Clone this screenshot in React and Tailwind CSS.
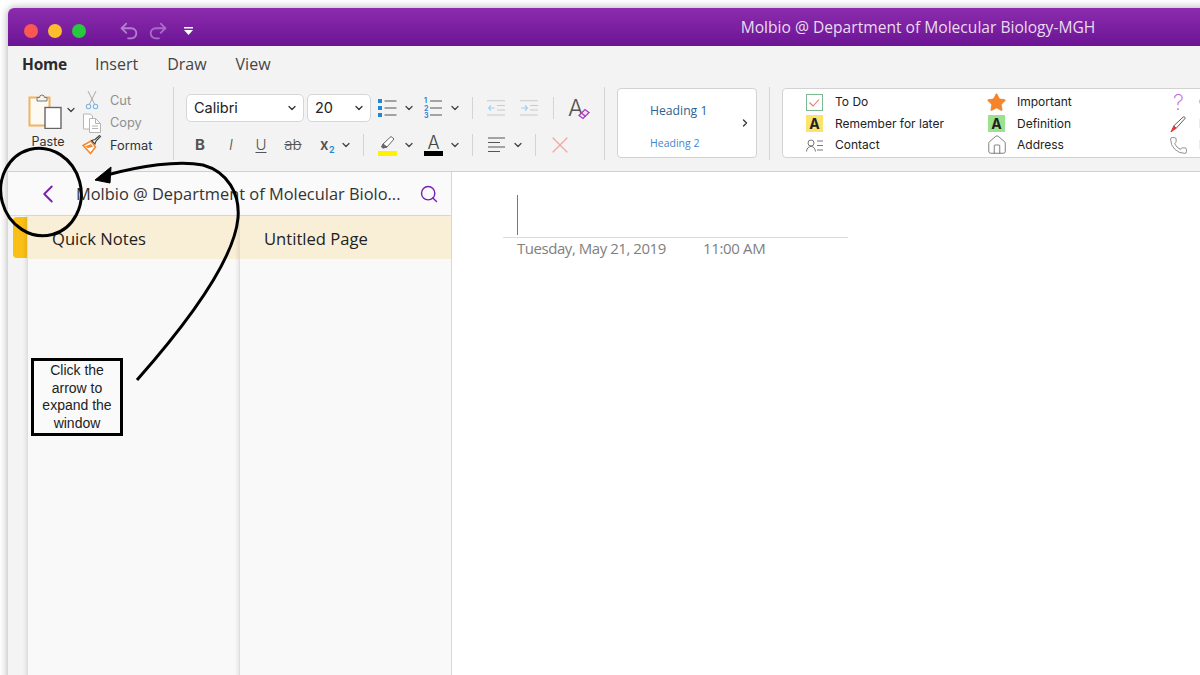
import { ChevronDown, ChevronLeft, ChevronRight, House, Phone, Redo2, Search, Star, Undo2, X } from 'lucide-react';

const ui = 'font-["Inter",sans-serif]';
const note = 'font-["Open_Sans",sans-serif]';

function Drop({ className = '' }) {
  return <ChevronDown size={12} strokeWidth={2.6} className={`shrink-0 text-[#444] ${className}`} />;
}

function Sep({ className = '' }) {
  return <div className={`w-px h-[22px] shrink-0 bg-[#d4d4d4] ${className}`} />;
}

function Select({ label, className = '' }) {
  return (
    <div className={`h-[28px] flex items-center justify-between pl-[7px] pr-[5px] bg-white border border-[#d6d6d6] rounded-[5px] text-[14.5px] text-[#222] ${ui} ${className}`}>
      {label}
      <ChevronDown size={12} strokeWidth={2.6} className="text-[#333]" />
    </div>
  );
}

function ClipboardIcon() {
  return (
    <svg width="34" height="36" viewBox="0 0 34 36" fill="none">
      <rect x="1.5" y="4.5" width="20" height="28" fill="#fdfaf4" stroke="#f2b261" strokeWidth="2" />
      <path d="M9 8V4.5h2.5a2.5 2.500 0 0 1 5 0H19V8Z" fill="#f3f3f3" stroke="#777" strokeWidth="1" />
      <rect x="17" y="14.5" width="16" height="21" fill="#fff" stroke="#666" strokeWidth="1.4" />
    </svg>
  );
}

function CutIcon() {
  return (
    <svg width="14" height="20" viewBox="0 0 14 20" fill="none">
      <path d="M3 1 9.500 14M11 1 4.500 14" stroke="#a9a9a9" strokeWidth="1" />
      <circle cx="3.500" cy="16.500" r="2.200" stroke="#7fb6e0" strokeWidth="1.100" />
      <circle cx="10.500" cy="16.500" r="2.200" stroke="#7fb6e0" strokeWidth="1.100" />
    </svg>
  );
}

function CopyIcon() {
  return (
    <svg width="20" height="20" viewBox="0 0 20 20" fill="none" stroke="#b5b5b5" strokeWidth="1">
      <path d="M1.500 1h7l2 2v13h-9Z" fill="#fff" />
      <path d="M7.500 5.500h6l5 5v9h-11Z" fill="#fff" />
      <path d="M13.500 5.500v5h5M10 13h6M10 15.500h6" />
    </svg>
  );
}

function FormatIcon() {
  return (
    <svg width="20" height="20" viewBox="0 0 20 20" fill="none">
      <path d="M1 10.500 9 6l4.500 6-5 6.500Z" fill="#fff" stroke="#f28a30" strokeWidth="1.600" />
      <path d="M3 11.500 9 9l2 3-5 1Z" fill="#f28a30" />
      <path d="M9.500 5.500 13 9l1-3 4.500-4.500-1-1L13 4.500Z" fill="#fff" stroke="#444" strokeWidth="1.100" />
    </svg>
  );
}

function BulletsIcon() {
  return (
    <svg width="19" height="20" viewBox="0 0 19 20">
      <rect x="0" y="1" width="4" height="4" fill="#1f86d8" />
      <rect x="0" y="8" width="4" height="4" fill="#1f86d8" />
      <rect x="0" y="15" width="4" height="4" fill="#1f86d8" />
      <path d="M6.500 3h12M6.500 10h12M6.500 17h12" stroke="#555" strokeWidth="1.100" />
    </svg>
  );
}

function NumbersIcon() {
  return (
    <svg width="18" height="22" viewBox="0 0 18 22">
      <g fill="#1f86d8" fontSize="7" fontWeight="700" fontFamily="Inter, sans-serif">
        <text x="0" y="6">1</text>
        <text x="0" y="13.500">2</text>
        <text x="0" y="21">3</text>
      </g>
      <path d="M6 4h12M6 11h12M6 18h12" stroke="#555" strokeWidth="1.100" />
    </svg>
  );
}

function IndentIcon({ flip }) {
  return (
    <svg width="18" height="16" viewBox="0 0 18 16" fill="none">
      <path d="M0 .8h18M10 5.500h8M10 10h8M0 15h18" stroke="#c9c9c9" strokeWidth="1.100" />
      {flip ? (
        <path d="M1 8h6M5 5.500 7.500 8 5 10.500" stroke="#9fd0f2" strokeWidth="1.100" />
      ) : (
        <path d="M7.500 8h-6M4 5.500 1.500 8 4 10.500" stroke="#9fd0f2" strokeWidth="1.100" />
      )}
    </svg>
  );
}

function ClearFormat() {
  return (
    <div className={`relative w-[20px] h-[24px] ${ui}`}>
      <span className="text-[23px] leading-[24px] font-light text-[#555]">A</span>
      <svg width="12" height="12" viewBox="0 0 12 12" className="absolute right-[-2px] bottom-[0px]" fill="#f4e6f7" stroke="#a63db8" strokeWidth="1.300">
        <path d="M1 7.500 7 1.500l4 3-6 6Z" />
        <path d="M3.500 5 7.500 8.500" />
      </svg>
    </div>
  );
}

function HighlightIcon() {
  return (
    <div className="w-[19px] flex flex-col items-center">
      <svg width="19" height="16" viewBox="0 0 19 16" fill="none" stroke="#666" strokeWidth="1">
        <path d="M5 9 13 1.500l3 2.500L9 12l-4 1Z" fill="#fff" />
        <path d="M5 9l4 3-4 1-1.500-1Z" fill="#666" />
      </svg>
      <div className="w-[19px] h-[5px] bg-[#fff200]" />
    </div>
  );
}

function FontColorIcon() {
  return (
    <div className={`w-[19px] flex flex-col items-center ${ui}`}>
      <span className="h-[16px] text-[18px] leading-[16px] font-light text-[#444]">A</span>
      <div className="w-[19px] h-[5px] bg-black" />
    </div>
  );
}

function AlignIcon() {
  return (
    <svg width="17" height="16" viewBox="0 0 17 16" stroke="#555" strokeWidth="1.100">
      <path d="M0 1h17M0 5.500h12M0 10h17M0 14.500h12" />
    </svg>
  );
}

function TodoIcon() {
  return (
    <svg width="17" height="17" viewBox="0 0 17 17" fill="none">
      <rect x=".5" y=".5" width="16" height="16" stroke="#7cb98f" />
      <path d="M3.500 8.500 7 12l6-6.500" stroke="#e8776b" strokeWidth="1.100" />
    </svg>
  );
}

function LetterTag({ bg }) {
  return (
    <div className={`w-[17px] h-[17px] flex items-center justify-center text-[14px] font-bold text-[#222] ${bg} ${ui}`}>A</div>
  );
}

function ContactIcon() {
  return (
    <svg width="17" height="13" viewBox="0 0 17 13" fill="none" stroke="#777" strokeWidth="1">
      <circle cx="5" cy="4" r="3" />
      <path d="M.5 12.500c.5-3.500 2-5 4.500-5s4 1.500 4.500 5M11 2h6M11 6.500h6M11 11h6" />
    </svg>
  );
}

function MarkerIcon() {
  return (
    <svg width="18" height="18" viewBox="0 0 18 18" fill="none" stroke="#555" strokeWidth="1">
      <path d="M4 11 14 1.500c1-.8 2.500.7 1.800 1.800L6.500 13.500Z" fill="#fff" />
      <path d="M4 11l2.500 2.500L1 17.500Z" fill="#e5343c" stroke="#e5343c" />
    </svg>
  );
}

function Tag({ icon, label }) {
  return (
    <div className={`h-[21.500px] flex items-center text-[12px] text-[#222] whitespace-nowrap ${ui}`}>
      <div className="w-[17px] flex justify-center shrink-0">{icon}</div>
      <span className="ml-[12px]">{label}</span>
    </div>
  );
}

function SmallAction({ icon, label, muted }) {
  return (
    <div className={`h-[22.500px] flex items-center ${ui}`}>
      <div className="w-[20px] flex justify-center">{icon}</div>
      <span className={`ml-[8px] text-[12.800px] ${muted ? 'text-[#8f8f8f]' : 'text-[#333]'}`}>{label}</span>
    </div>
  );
}

function Ribbon() {
  return (
    <div className="h-[126px] bg-[#f3f3f3] border-b border-[#d0d0d0]">
      <div className={`h-[40px] flex items-start pl-[14px] pt-[7px] text-[16px] text-[#444] font-medium ${note}`}>
        <div className="w-[45px] h-[24px] flex flex-col">
          <span className="leading-[22px] text-[15.500px] font-bold text-[#2b2b2b] tracking-[-0.2px]">Home</span>
          <div className="mt-[2px] h-[2.500px] rounded-full bg-[#7719aa]" />
        </div>
        <span className="ml-[28px] leading-[22px]">Insert</span>
        <span className="ml-[29px] leading-[22px]">Draw</span>
        <span className="ml-[29px] leading-[22px]">View</span>
      </div>

      <div className="flex items-start h-[85px]">
        <div className="w-[165px] flex shrink-0 pl-[20px]">
          <div className="w-[34px] pt-[7px] flex flex-col items-center">
            <ClipboardIcon />
            <span className={`mt-[5px] ml-[6px] text-[12.500px] leading-[16px] text-[#333] ${ui}`}>Paste</span>
          </div>
          <Drop className="ml-[3px] mt-[18px]" />
          <div className="ml-[5px] pt-[3px]">
            <SmallAction muted label="Cut" icon={<CutIcon />} />
            <SmallAction muted label="Copy" icon={<CopyIcon />} />
            <SmallAction label="Format" icon={<FormatIcon />} />
          </div>
        </div>
        <div className="w-px h-[73px] mt-[1px] bg-[#d4d4d4] shrink-0" />

        <div className="w-[430px] shrink-0 pl-[12px] pt-[8px]">
          <div className="h-[28px] flex items-center">
            <Select label="Calibri" className="w-[118px]" />
            <Select label="20" className="w-[64px] ml-[3px]" />
            <div className="ml-[7px]"><BulletsIcon /></div>
            <Drop className="ml-[6px]" />
            <div className="ml-[9px]"><NumbersIcon /></div>
            <Drop className="ml-[7px]" />
            <Sep className="ml-[11px]" />
            <div className="ml-[14px]"><IndentIcon /></div>
            <div className="ml-[15px]"><IndentIcon flip /></div>
            <Sep className="ml-[15px]" />
            <div className="ml-[14px]"><ClearFormat /></div>
          </div>
          <div className={`h-[24px] mt-[11px] flex items-center text-[#555] ${ui}`}>
            <span className="w-[28px] text-center text-[15px] font-bold">B</span>
            <span className="w-[28px] ml-[3px] text-center text-[15px] italic font-light">I</span>
            <span className="w-[28px] ml-[2px] text-center text-[15px] underline underline-offset-2 font-light">U</span>
            <span className="w-[28px] ml-[4px] text-center text-[15px] line-through font-light">ab</span>
            <span className="w-[15px] ml-[13px] text-[15px] font-semibold relative">
              x
              <span className="absolute left-[9px] top-[9px] text-[9px] text-[#1f86d8]">2</span>
            </span>
            <Drop className="ml-[5px]" />
            <Sep className="ml-[11px]" />
            <div className="ml-[14px]"><HighlightIcon /></div>
            <Drop className="ml-[6px]" />
            <div className="ml-[9px]"><FontColorIcon /></div>
            <Drop className="ml-[6px]" />
            <Sep className="ml-[11px]" />
            <div className="ml-[15px]"><AlignIcon /></div>
            <Drop className="ml-[7px]" />
            <Sep className="ml-[11px]" />
            <X size={28} strokeWidth={1.100} className="ml-[10px] shrink-0 text-[#f3a5a5]" />
          </div>
        </div>
        <div className="w-px h-[73px] mt-[1px] bg-[#d4d4d4] shrink-0" />

        <div className={`w-[140px] h-[70px] ml-[12px] mt-[2px] shrink-0 flex bg-white border border-[#d2d2d2] rounded-[4px] pl-[32px] pr-[5px] ${note}`}>
          <div className="flex-1 pt-[13px]">
            <div className="text-[12.200px] leading-[18px] text-[#2e5f94]">Heading 1</div>
            <div className="mt-[15px] text-[10.500px] leading-[16px] text-[#3f86cc]">Heading 2</div>
          </div>
          <ChevronRight size={12} strokeWidth={2.600} className="self-center text-[#333]" />
        </div>
        <div className="w-px h-[73px] ml-[12px] mt-[1px] bg-[#d4d4d4] shrink-0" />

        <div className="w-[700px] h-[70px] ml-[12px] mt-[2px] shrink-0 flex bg-white border border-[#d2d2d2] rounded-[4px] pl-[23px] pt-[2.500px]">
          <div className="w-[182px]">
            <Tag icon={<TodoIcon />} label="To Do" />
            <Tag icon={<LetterTag bg="bg-[#fce36e]" />} label="Remember for later" />
            <Tag icon={<ContactIcon />} label="Contact" />
          </div>
          <div className="w-[182px]">
            <Tag icon={<Star size={21} fill="#f5842b" strokeWidth={1} className="shrink-0 text-[#f5842b]" />} label="Important" />
            <Tag icon={<LetterTag bg="bg-[#9be28f]" />} label="Definition" />
            <Tag icon={<House size={22} strokeWidth={0.900} className="shrink-0 text-[#666]" />} label="Address" />
          </div>
          <div>
            <Tag icon={<span className="text-[22px] leading-[20px] font-extralight text-[#c264d6]">?</span>} label="Question" />
            <Tag icon={<MarkerIcon />} label="Highlight" />
            <Tag icon={<Phone size={19} strokeWidth={0.900} className="shrink-0 text-[#666]" />} label="Phone number" />
          </div>
        </div>
      </div>
    </div>
  );
}

function Notebook() {
  return (
    <div className="w-[443px] shrink-0 flex flex-col">
      <div className={`h-[44px] shrink-0 flex items-center bg-[#fafafa] border-b border-[#dcdcdc] ${note}`}>
        <ChevronLeft size={30} strokeWidth={1.500} className="ml-[25px] shrink-0 text-[#7a1fb5]" />
        <span className="ml-[13px] pt-[2px] text-[16.400px] text-[#333] whitespace-nowrap">Molbio @ Department of Molecular Biolo...</span>
        <Search size={20} strokeWidth={1.700} className="ml-[19px] shrink-0 text-[#7a1fb5]" />
      </div>
      <div className={`flex-1 flex bg-[#f9f9f9] text-[16.600px] text-[#222] ${note}`}>
        <div className="w-[19px] shrink-0 bg-[#f4f4f4] pt-[1px] pl-[5px]">
          <div className="w-[14px] h-[41px] rounded-l-[4px] bg-[#f9bf17]" />
        </div>
        <div className="w-[212px] shrink-0 border-l border-[#dedede] shadow-[-2px_0_3px_rgba(0,0,0,0.07)]">
          <div className="h-[43px] flex items-center pl-[24px] pt-[3px] bg-[#f9efd7]">Quick Notes</div>
        </div>
        <div className="w-[212px] shrink-0 border-l border-[#dedede] shadow-[-2px_0_3px_rgba(0,0,0,0.07)]">
          <div className="h-[43px] flex items-center pl-[24px] pt-[3px] bg-[#f9efd7]">Untitled Page</div>
        </div>
      </div>
    </div>
  );
}

function NotePage() {
  return (
    <div className="flex-1 bg-white border-l border-[#d6d6d6] pl-[51px] pt-[23px]">
      <div className="w-[345px] h-[43px] border-b border-[#dcdcdc] pl-[14px]">
        <div className="w-px h-[40px] bg-[#777]" />
      </div>
      <div className={`w-[345px] pl-[14px] flex text-[15px] leading-[20px] text-[#7f7f7f] ${note}`}>
        <span className="w-[186px] tracking-[-0.45px]">Tuesday, May 21, 2019</span>
        <span className="tracking-[-0.35px]">11:00 AM</span>
      </div>
    </div>
  );
}

function Callout() {
  return (
    <>
      <svg width="300" height="300" viewBox="0 0 300 300" fill="none" className="absolute left-0 top-[130px] pointer-events-none">
        <ellipse cx="41" cy="62" rx="40" ry="44" stroke="#000" strokeWidth="3" transform="rotate(-15 41 62)" />
        <path d="M107 45C140 36 178 30 203 35 228 42 240 64 238 88 234 130 190 190 137 250" stroke="#000" strokeWidth="3" />
        <path d="M95 50 111 37 110 53Z" fill="#000" stroke="#000" />
      </svg>
      <div className={`absolute left-[31px] top-[358px] w-[92px] h-[78px] flex items-center justify-center bg-[#fafafa] border-[3px] border-black text-center text-[14px] leading-[17.500px] text-[#222] font-["Liberation_Sans",sans-serif]`}>
        Click the arrow to expand the window
      </div>
    </>
  );
}

export default function App() {
  return (
    <div className="relative w-[1200px] h-[675px] overflow-hidden bg-white pl-[8px] pt-[8px]">
      <div className="w-[1820px] h-[900px] flex flex-col rounded-t-[6px] overflow-hidden shadow-[0_0_9px_rgba(0,0,0,0.35)]">
        <div className="relative h-[38px] shrink-0 flex items-center justify-center bg-gradient-to-b from-[#8c2bad] to-[#6b1494]">
          <div className="absolute left-[16px] top-[12px] flex items-center">
            <div className="w-[14px] h-[14px] rounded-full bg-[#fc5753]" />
            <div className="w-[14px] h-[14px] ml-[10px] rounded-full bg-[#fdbc2e]" />
            <div className="w-[14px] h-[14px] ml-[10px] rounded-full bg-[#28c83f]" />
            <Undo2 size={22} strokeWidth={2} className="ml-[32px] shrink-0 text-[#b27fd0]" />
            <Redo2 size={22} strokeWidth={2} className="ml-[7px] shrink-0 text-[#a86cc8]" />
            <svg width="9" height="9" viewBox="0 0 9 9" className="ml-[15px] text-white" fill="currentColor">
              <rect x="0" y="0" width="9" height="1.500" />
              <path d="M0 3h9L4.500 8Z" />
            </svg>
          </div>
          <span className={`pt-[2px] text-[15.600px] text-[#e9dcf0] ${note}`}>Molbio @ Department of Molecular Biology-MGH</span>
        </div>
        <Ribbon />
        <div className="flex-1 flex">
          <Notebook />
          <NotePage />
        </div>
      </div>
      <Callout />
    </div>
  );
}
